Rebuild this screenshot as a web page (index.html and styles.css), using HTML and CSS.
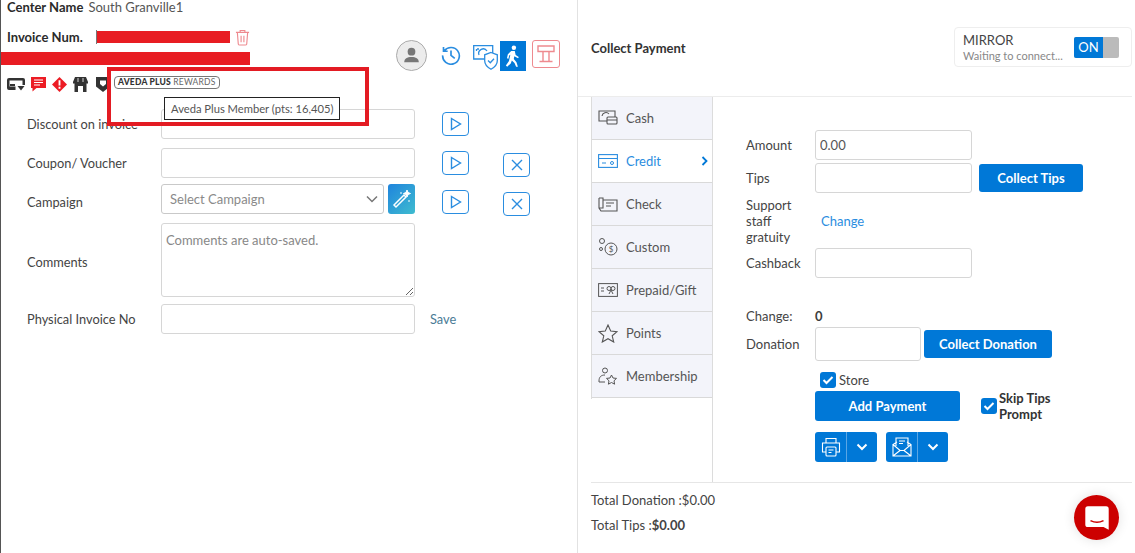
FILE: index.html
```html
<!DOCTYPE html>
<html lang="en">
<head>
<meta charset="utf-8">
<title>Collect Payment</title>
<link rel="stylesheet" href="styles.css">
</head>
<body>
<div class="page">
  <section class="left">
    <div class="center-row"><b>Center Name</b><span>South Granville1</span></div>
    <div class="invoice-row">
      <b>Invoice Num.</b><span class="caret"></span>
      <svg class="trash" viewBox="0 0 16 18" width="15" height="17"><path d="M1 3.500h14M5.500 3.500V1.500h5v2M2.500 3.500l1 12.500a1.500 1.500 0 0 0 1.500 1h6a1.500 1.500 0 0 0 1.500-1l1-12.500M6.500 7v7M9.500 7v7" fill="none" stroke="#ee8a8f" stroke-width="1.200"/></svg>
    </div>
    <div class="tools">
      <svg class="avatar" viewBox="0 0 32 32" width="31" height="31"><circle cx="16" cy="16" r="15.500" fill="#ececec" stroke="#a8a8a8"/><circle cx="16" cy="12" r="4" fill="#777"/><path d="M8.500 23c0-4 3-5.500 7.500-5.500s7.500 1.500 7.500 5.500z" fill="#777"/></svg>
      <svg class="history" viewBox="0 0 24 24" width="20" height="20"><path d="M4 7A10 10 0 1 1 2 12.500M3 2.500V7.500h5M12 6.500v6l4.500 3.500" fill="none" stroke="#2a8de0" stroke-width="2"/></svg>
      <svg class="shield" viewBox="0 0 25 25" width="25" height="25"><path d="M12 14H.7V.7h19V8" fill="none" stroke="#2a8de0" stroke-width="1.300"/><path d="M4 4h2M3.500 4v2M16 11h1M6 10a4.500 4.500 0 0 1 8-4" fill="none" stroke="#2a8de0" stroke-width="1.300"/><path d="M18 7.500l6.300 2.300v6c0 4-3.300 6.800-6.300 8.400-3-1.600-6.300-4.400-6.300-8.400v-6z" fill="#fff" stroke="#2a8de0" stroke-width="1.300"/><path d="M15 15.500l2.300 2.300 3.700-4" fill="none" stroke="#2a8de0" stroke-width="1.300"/></svg>
      <span class="walk"><svg viewBox="0 0 18 24" width="16" height="22"><circle cx="10" cy="2.800" r="2.500" fill="#fff"/><path d="M7 6.500l4 0 1 4.500 3.500 2-.8 1.400-4.200-2.200-.6 3.300 3 3.500 1.600 5h-2l-1.800-4.200-3-2.800-1.200 3.300L2.500 24 1 22.800l3.500-5.300L6 10.500 4.700 11.500l-.8 3.500-1.700-.4L3.200 10z" fill="#fff"/></svg></span>
      <span class="stand"><svg viewBox="0 0 20 20" width="20" height="20"><path d="M2 2h16v5.500H2zM7 7.500V17M13 7.500V17M3.500 17.500h13" fill="none" stroke="#ee8a8f" stroke-width="1.400"/></svg></span>
    </div>
    <div class="badges">
      <svg viewBox="0 0 18 14" width="18" height="14"><path d="M2 1h14a2 2 0 0 1 2 2v5h-2.500V3.500h-13v6h6V13H2a2 2 0 0 1-2-2V3a2 2 0 0 1 2-2z" fill="#333"/><path d="M3 9h5v-2H3z" fill="#333"/><path d="M10.500 9h7L14 13.500z" fill="#333"/></svg>
      <svg viewBox="0 0 15 16" width="15" height="16"><path d="M0 1h15v11H5.500L1.500 15.500V12H0z" fill="#ec1c24"/><path d="M3 4h9M3 6.500h9M3 9h6" stroke="#fff" stroke-width="1.100"/></svg>
      <svg viewBox="0 0 16 16" width="15" height="15"><path d="M8 0l8 8-8 8-8-8z" fill="#ec1c24"/><path d="M8 3.500v5.500M8 10.500v2" stroke="#fff" stroke-width="2"/></svg>
      <svg viewBox="0 0 15 15" width="15" height="15"><path d="M2 0h11l2 5v1.500H0V5z" fill="#333"/><path d="M1.500 6v9h3.500V9h5v6h3.500V6z" fill="#333"/><path d="M5 1v4M10 1v4" stroke="#fff" stroke-width=".8"/></svg>
      <svg class="badge-last" viewBox="0 0 14 16" width="14" height="16"><path d="M0 1h14v9.500L7 16 0 10.500z" fill="#333"/><path d="M4 4.500h6V8l-3 2.500L4 8z" fill="#fff"/></svg>
      <span class="aveda"><b>AVEDA PLUS</b> REWARDS</span>
    </div>
    <form class="form">
      <label>Discount on invoice</label><input class="field"><button type="button" class="square"><svg viewBox="0 0 14 14" width="14" height="14"><path d="M2.500 1.500l9 5.500-9 5.500z" fill="none" stroke="#2a8de0" stroke-width="1.400"/></svg></button><span></span>
      <label>Coupon/ Voucher</label><input class="field"><button type="button" class="square"><svg viewBox="0 0 14 14" width="14" height="14"><path d="M2.500 1.500l9 5.500-9 5.500z" fill="none" stroke="#2a8de0" stroke-width="1.400"/></svg></button><button type="button" class="square low"><svg viewBox="0 0 14 14" width="14" height="14"><path d="M2 2l10 10M12 2L2 12" stroke="#2a8de0" stroke-width="1.400"/></svg></button>
      <label class="label-campaign">Campaign</label><div class="campaign"><div class="select">Select Campaign<svg viewBox="0 0 12 8" width="12" height="8"><path d="M1 1.500l5 5 5-5" fill="none" stroke="#777" stroke-width="1.500"/></svg></div><span class="magic"><svg viewBox="0 0 20 20" width="20" height="20"><path d="M2 16L12 6l2 2L4 18z" fill="none" stroke="#fff" stroke-width="1.500"/><path d="M15 1l1 2.500 2.500 1-2.500 1-1 2.500-1-2.500-2.500-1 2.500-1zM9 3v2M17 11v2" stroke="#fff" fill="#fff"/></svg></span></div><button type="button" class="square third"><svg viewBox="0 0 14 14" width="14" height="14"><path d="M2.500 1.500l9 5.500-9 5.500z" fill="none" stroke="#2a8de0" stroke-width="1.400"/></svg></button><button type="button" class="square low third-x"><svg viewBox="0 0 14 14" width="14" height="14"><path d="M2 2l10 10M12 2L2 12" stroke="#2a8de0" stroke-width="1.400"/></svg></button>
      <label class="label-comments">Comments</label><textarea class="field area" placeholder="Comments are auto-saved."></textarea><span></span><span></span>
      <label>Physical Invoice No</label><input class="field"><a class="save">Save</a><span></span>
    </form>
    <div class="scribble one"></div>
    <div class="scribble two"></div>
    <div class="callout"></div>
    <div class="tooltip">Aveda Plus Member (pts: 16,405)</div>
  </section>

  <section class="right">
    <header class="head">
      <h1>Collect Payment</h1>
      <div class="mirror">
        <div class="mirror-text"><div class="mirror-title">MIRROR</div><div class="mirror-sub">Waiting to connect...</div></div>
        <div class="toggle"><span>ON</span></div>
      </div>
    </header>
    <div class="pay">
      <nav class="tabs">
        <a class="tab"><svg viewBox="0 0 20 16" width="20" height="16"><path d="M12 11H1V1h16v6M4 6a4 4 0 0 1 7-2" fill="none" stroke="#555" stroke-width="1.100"/><rect x="9" y="7" width="10" height="7" rx="1" fill="#f3f4fa" stroke="#555" stroke-width="1.100"/><path d="M9 10h10" stroke="#555"/></svg>Cash</a>
        <a class="tab active"><svg viewBox="0 0 20 14" width="20" height="14"><rect x=".6" y=".6" width="18.800" height="12.800" fill="none" stroke="#2a8de0" stroke-width="1.100"/><path d="M1 4.500h18M4 9h4" stroke="#2a8de0" stroke-width="1.100"/><circle cx="14" cy="9" r="1.500" fill="none" stroke="#2a8de0"/></svg>Credit<svg class="chev" viewBox="0 0 7 10" width="7" height="10"><path d="M1.500 1l4 4-4 4" fill="none" stroke="#0078d7" stroke-width="1.800"/></svg></a>
        <a class="tab"><svg viewBox="0 0 20 15" width="20" height="15"><path d="M1 1v10l2 3h16V3H5M1 1h4v10H1M8 6h8M8 9h5" fill="none" stroke="#555" stroke-width="1.100"/></svg>Check</a>
        <a class="tab"><svg viewBox="0 0 20 18" width="20" height="18"><circle cx="4" cy="3" r="2.500" fill="none" stroke="#555"/><circle cx="13" cy="11" r="6" fill="none" stroke="#555"/><circle cx="3" cy="11" r="1.500" fill="none" stroke="#555"/><text x="13" y="14" font-size="8" text-anchor="middle" fill="#555" font-family="Lato">$</text></svg>Custom</a>
        <a class="tab"><svg viewBox="0 0 20 14" width="20" height="14"><rect x=".6" y=".6" width="18.800" height="12.800" fill="none" stroke="#555"/><path d="M3 5h3M3 8h3" stroke="#555"/><circle cx="11" cy="5.500" r="2" fill="none" stroke="#555"/><circle cx="15" cy="5.500" r="2" fill="none" stroke="#555"/><path d="M13 7l-2 4M13 7l2 4" stroke="#555"/></svg>Prepaid/Gift</a>
        <a class="tab"><svg viewBox="0 0 20 19" width="20" height="19"><path d="M10 1l2.700 6 6.300.6-4.800 4.200 1.500 6.200-5.700-3.300L4.300 18l1.500-6.200L1 7.600 7.300 7z" fill="none" stroke="#555" stroke-width="1.100"/></svg>Points</a>
        <a class="tab"><svg viewBox="0 0 20 18" width="20" height="18"><circle cx="7" cy="3.500" r="2.500" fill="none" stroke="#555"/><path d="M1 14c0-4 2-6 6-6M1 14v1h6" fill="none" stroke="#555"/><path d="M13.500 8l1.500 3 3.500.4-2.500 2.400.6 3.400-3.100-1.700-3.100 1.700.6-3.400-2.500-2.400 3.500-.4z" fill="none" stroke="#555"/></svg>Membership</a>
      </nav>
      <div class="panel">
        <div class="pay-row r1"><label>Amount</label><input class="field amount" value="0.00"></div>
        <div class="pay-row r2"><label>Tips</label><input class="field amount"><button type="button" class="primary tips">Collect Tips</button></div>
        <div class="pay-row r3"><label class="multi">Support staff gratuity</label><a class="link">Change</a></div>
        <div class="pay-row r4"><label>Cashback</label><input class="field amount"></div>
        <div class="pay-row r5"><label>Change:</label><b>0</b></div>
        <div class="pay-row r6"><label>Donation</label><input class="field donation"><button type="button" class="primary collect">Collect Donation</button></div>
        <div class="store"><span class="check"><svg viewBox="0 0 12 10" width="12" height="10"><path d="M1.500 5l3 3 6-6" fill="none" stroke="#fff" stroke-width="2"/></svg></span>Store</div>
        <div class="add-row">
          <button type="button" class="primary add">Add Payment</button>
          <div class="skip"><span class="check"><svg viewBox="0 0 12 10" width="12" height="10"><path d="M1.500 5l3 3 6-6" fill="none" stroke="#fff" stroke-width="2"/></svg></span><b>Skip Tips Prompt</b></div>
        </div>
        <div class="split-row">
          <div class="split"><span class="ico"><svg viewBox="0 0 20 20" width="20" height="20"><path d="M5 6V1.500h10V6M5 15H1.500V6h17v9H15" fill="none" stroke="#fff" stroke-width="1.100"/><rect x="5" y="10" width="10" height="9" rx="1" fill="none" stroke="#fff" stroke-width="1.100"/><path d="M7.500 13h5M7.500 15.500h3" stroke="#fff"/></svg></span><span class="drop"><svg viewBox="0 0 12 8" width="12" height="8"><path d="M1.500 1.500L6 6l4.500-4.500" fill="none" stroke="#fff" stroke-width="2"/></svg></span></div>
          <div class="split"><span class="ico"><svg viewBox="0 0 20 20" width="20" height="20"><path d="M1 7.500V19h18V7.500L15 5M5 5L1 7.500l7 6h4l7-6M1 19l7-5.500M19 19l-7-5.500M4 9V1h12v8M7 4h6M7 6.500h4" fill="none" stroke="#fff" stroke-width="1.100"/></svg></span><span class="drop"><svg viewBox="0 0 12 8" width="12" height="8"><path d="M1.500 1.500L6 6l4.500-4.500" fill="none" stroke="#fff" stroke-width="2"/></svg></span></div>
        </div>
      </div>
    </div>
    <div class="totals">
      <div>Total Donation :$0.00</div>
      <div>Total Tips :<b>$0.00</b></div>
    </div>
    <div class="chat"><svg viewBox="0 0 20 20" width="26" height="26"><path d="M3 1h14a2 2 0 0 1 2 2v16l-4-2H3a2 2 0 0 1-2-2V3a2 2 0 0 1 2-2z" fill="#fff"/><path d="M5 12c3 1.500 7 1.500 10 0" fill="none" stroke="#cc0000" stroke-width="1.200"/></svg></div>
  </section>
</div>
</body>
</html>
```
FILE: styles.css
```css
* { box-sizing: border-box; }
html, body { margin: 0; height: 100%; background: #fff; overflow: hidden; }
body { font-family: Lato, "Open Sans", sans-serif; font-size: 13px; color: #3d3d3d; }
svg { display: block; flex: none; }
b { font-weight: 700; }

.page { display: flex; width: 1132px; height: 553px; border-left: 1px solid #555; }
.left { position: relative; width: 577px; flex: none; border-right: 1px solid #e2e2e2; }

.center-row { display: flex; gap: 5px; height: 14px; margin-left: 6px; line-height: 14px; }
.center-row b { color: #2b2b2b; }
.center-row span { color: #555; }
.invoice-row { display: flex; align-items: center; height: 18px; margin: 14px 0 0 6px; }
.invoice-row b { color: #2b2b2b; width: 89px; }
.caret { width: 1px; height: 14px; background: #777; }
.trash { margin-left: 138px; }

.tools { display: flex; align-items: center; height: 32px; margin: -7px 0 0 395px; }
.history { margin-left: 14px; }
.shield { margin-left: 12px; margin-top: 4px; }
.walk { display: flex; align-items: center; justify-content: center; width: 26px; height: 30px; margin-left: 2px; margin-top: 2px; background: #0078d7; }
.stand { display: flex; align-items: center; justify-content: center; width: 28px; height: 28px; margin-left: 6px; margin-bottom: 2px; border: 1px solid #ee8a8f; border-radius: 3px; }

.badges { display: flex; align-items: center; gap: 6px; height: 18px; margin: 4px 0 0 6px; }
.badge-last { margin-left: 2px; }
.aveda { height: 13px; margin-left: -2px; margin-top: -3px; padding: 0 3px; border: 1px solid #777; border-radius: 4px; font-size: 8.500px; line-height: 11px; letter-spacing: .2px; color: #666; white-space: nowrap; }
.aveda b { color: #333; font-weight: 900; }

.form { display: grid; grid-template-columns: 134px 254px 54px 61px; grid-template-rows: 39px 36px 39px 81px 30px; align-items: start; margin: 16px 0 0 26px; }
.form > :nth-child(4n+3) { margin-left: 27px; }
.form > :nth-child(4n) { margin-left: 34px; }
.form label { padding-top: 7px; color: #444; font-size: 12.800px; }
.form .label-campaign { padding-top: 10px; }
.form .label-comments { padding-top: 31px; }
.field { display: block; height: 30px; width: 254px; border: 1px solid #d6d6d6; border-radius: 3px; background: #fff; font: inherit; color: #555; padding: 0 4px; outline: 0; }
.area { height: 74px; padding: 8px 4px; resize: both; }
.area::placeholder { color: #888; }
.campaign { display: flex; gap: 4px; width: 254px; }
.select { display: flex; align-items: center; justify-content: space-between; width: 223px; height: 30px; padding: 0 5px 0 8px; border: 1px solid #c9c9c9; border-radius: 3px; color: #8a8a8a; }
.magic { display: flex; align-items: center; justify-content: center; width: 27px; height: 30px; border-radius: 3px; background: linear-gradient(135deg, #1f84dd, #3fbccf); }
.square { display: flex; align-items: center; justify-content: center; width: 27px; height: 24px; margin-top: 3px; padding: 0; background: #fff; border: 1.500px solid #2a8de0; border-radius: 4px; }
.low { margin-top: 5px; }
.third { margin-top: 6px; }
.third-x { margin-top: 8px; }
.form > .save { display: block; margin-left: 15px; padding-top: 7px; color: #4a7b96; font-size: 12.800px; }

.scribble { position: absolute; background: #e81c22; }
.scribble.one { left: 96px; top: 31px; width: 133px; height: 12px; }
.scribble.two { left: 0; top: 52px; width: 249px; height: 13px; }
.callout { position: absolute; left: 106px; top: 67px; width: 262px; height: 59px; border: 4px solid #e31b23; }
.tooltip { position: absolute; left: 163px; top: 97px; width: 176px; height: 23px; border: 1px solid #222; background: #fff; padding: 0 6px; font-size: 11.200px; line-height: 21px; color: #555; white-space: nowrap; }

.right { position: relative; flex: 1; min-width: 0; }
.head { display: flex; align-items: center; justify-content: space-between; height: 97px; padding: 0 0 0 13px; border-bottom: 1px solid #ececec; }
.head h1 { margin: 0; font-size: 13px; font-weight: 700; color: #333; }
.mirror { display: flex; align-items: center; justify-content: space-between; width: 178px; height: 40px; margin-top: -2px; padding: 0 12px 0 8px; border: 1px solid #eee; border-radius: 4px; }
.mirror-title { font-size: 13px; line-height: 16px; color: #444; }
.mirror-sub { font-size: 11px; line-height: 15px; color: #888; }
.toggle { width: 45px; height: 21px; border-radius: 2px; background: #bbb; }
.toggle span { display: block; width: 29px; height: 21px; border-radius: 2px 0 0 2px; background: #0078d7; color: #fff; font-size: 13px; line-height: 21px; text-align: center; }

.pay { display: flex; height: 386px; margin-left: 13px; border-bottom: 1px solid #e6e6e6; }
.tabs { width: 121px; height: 302px; flex: none; border-left: 1px solid #dcdcdc; }
.tab { display: flex; align-items: center; gap: 8px; height: 43px; padding-left: 6px; border-bottom: 1px solid #d9d9d9; background: #f3f4fa; color: #555; }
.tab.active { background: #fff; color: #2a8de0; }
.chev { margin-left: 32px; }
.panel { flex: 1; border-left: 1px solid #dcdcdc; padding-left: 33px; }
.pay-row { display: flex; align-items: center; }
.pay-row label { width: 69px; flex: none; color: #444; }
.amount { width: 157px; }
.donation { width: 106px; height: 34px; }
.r1 { margin-top: 33px; }
.r2 { margin-top: 3px; }
.r3 { height: 48px; margin-top: 4px; }
.r3 .multi { width: 56px; margin-right: 19px; line-height: 16px; }
.link { color: #2a8de0; }
.r4 { margin-top: 3px; }
.r5 { height: 18px; margin-top: 29px; }
.r6 { margin-top: 2px; height: 34px; }
.primary { height: 28px; padding: 0; border: 0; border-radius: 3px; background: #0078d7; color: #fff; font: 700 13px Lato, sans-serif; }
.tips { width: 104px; margin-left: 7px; }
.collect { width: 128px; margin-left: 3px; }
.store { display: flex; align-items: center; gap: 3px; height: 16px; margin: 11px 0 0 74px; color: #444; }
.check { display: flex; align-items: center; justify-content: center; width: 16px; height: 16px; border-radius: 3px; background: #0078d7; flex: none; }
.add-row { display: flex; align-items: center; height: 30px; margin: 3px 0 0 69px; }
.add { width: 145px; height: 30px; }
.skip { display: flex; align-items: center; gap: 2px; width: 80px; margin-left: 21px; line-height: 16px; color: #333; }
.split-row { display: flex; gap: 9px; margin: 11px 0 0 69px; }
.split { display: flex; height: 30px; border-radius: 3px; overflow: hidden; background: #0078d7; }
.ico { display: flex; align-items: center; justify-content: center; width: 32px; border-right: 1px solid #5aa6e5; }
.drop { display: flex; align-items: center; justify-content: center; width: 30px; }

.totals { margin: 8px 0 0 13px; color: #444; }
.totals div { height: 25px; line-height: 18px; }
.chat { position: absolute; right: 13px; bottom: 13px; display: flex; align-items: center; justify-content: center; width: 45px; height: 45px; border-radius: 50%; background: #cc0000; box-shadow: 0 0 12px rgba(0,0,0,.12); }
```
